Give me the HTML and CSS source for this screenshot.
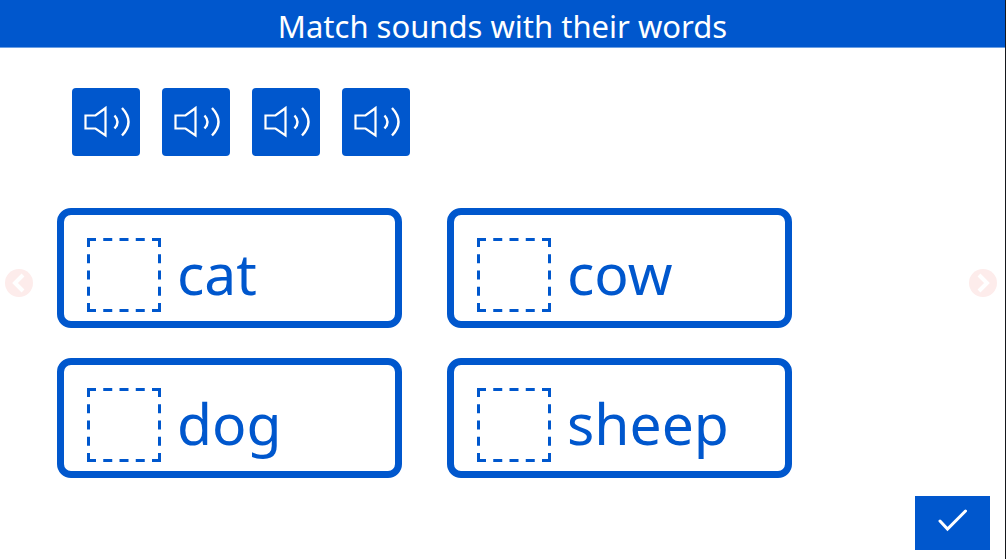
FILE: index.html
```html
<!DOCTYPE html>
<html lang="en">
<head>
<meta charset="utf-8">
<meta name="viewport" content="width=device-width, initial-scale=1">
<title>Match sounds with their words</title>
<link rel="stylesheet" href="styles.css">
</head>
<body>
<svg class="symbols" aria-hidden="true">
  <symbol id="speaker" viewBox="0 0 68 68">
    <path d="M13.500 27.500H23.500L33.500 20V47.500L23.500 40.500H13.500Z" stroke-width="2.200"/>
    <path d="M42.500 27.500Q48.500 34 42.500 40.500M50 20Q63 34 50 47.500" stroke-width="2.400"/>
  </symbol>
  <symbol id="slot" viewBox="0 0 74 74">
    <path d="M0 1.500H74M0 72.500H74M1.500 0V74M72.500 0V74" stroke-width="3" stroke-dasharray="9 7.250"/>
  </symbol>
</svg>
<header class="header"><h1 class="title">Match sounds with their words</h1></header>
<main class="activity">
  <button class="nav" type="button" aria-label="Previous">
    <svg class="nav-icon" viewBox="0 0 28 28"><circle cx="14" cy="14" r="14"/><path d="M18 6L10 14L18 22"/></svg>
  </button>
  <div class="board">
    <div class="sounds">
      <button class="sound" type="button" aria-label="Play sound 1"><svg class="icon"><use href="#speaker"/></svg></button>
      <button class="sound" type="button" aria-label="Play sound 2"><svg class="icon"><use href="#speaker"/></svg></button>
      <button class="sound" type="button" aria-label="Play sound 3"><svg class="icon"><use href="#speaker"/></svg></button>
      <button class="sound" type="button" aria-label="Play sound 4"><svg class="icon"><use href="#speaker"/></svg></button>
    </div>
    <div class="words">
      <div class="card"><svg class="slot"><use href="#slot"/></svg><span class="word">cat</span></div>
      <div class="card"><svg class="slot"><use href="#slot"/></svg><span class="word">cow</span></div>
      <div class="card"><svg class="slot"><use href="#slot"/></svg><span class="word">dog</span></div>
      <div class="card"><svg class="slot"><use href="#slot"/></svg><span class="word">sheep</span></div>
    </div>
  </div>
  <button class="nav" type="button" aria-label="Next">
    <svg class="nav-icon" viewBox="0 0 28 28"><circle cx="14" cy="14" r="14"/><path d="M10 6L18 14L10 22"/></svg>
  </button>
</main>
<footer class="footer">
  <button class="check" type="button" aria-label="Check answers">
    <svg class="check-icon" viewBox="0 0 30 24"><path d="M2 12L9.500 20L27.500 2"/></svg>
  </button>
</footer>
</body>
</html>
```

FILE: styles.css
```css
* {
  box-sizing: border-box;
}

body {
  display: flex;
  flex-direction: column;
  min-height: 100vh;
  margin: 0;
  border-right: 1px solid #16181d;
  background: #fff;
  color: #0057cd;
  font-family: "Noto Sans", "Open Sans", sans-serif;
}

button {
  padding: 0;
  border: 0;
  cursor: pointer;
}

svg {
  display: block;
  fill: none;
}

.symbols {
  position: absolute;
  width: 0;
  height: 0;
}

.header {
  padding: 6px 16px 1px;
  border-bottom: 1px solid #6b9fe3;
  background: #0057cd;
  color: #fff;
  text-align: center;
}

.title {
  margin: 0;
  font-size: 31px;
  font-weight: 400;
  line-height: 40px;
}

.activity {
  display: flex;
  align-items: center;
  gap: 24px;
  padding: 40px 8px 0 5px;
}

.nav {
  flex: none;
  background: none;
}

.nav-icon {
  width: 28px;
  height: 28px;
  fill: #fdeceb;
  stroke: none;
}

.nav-icon path {
  fill: none;
  stroke: #fff;
  stroke-width: 4;
}

.board {
  flex: 1;
}

.sounds {
  display: flex;
  gap: 22px;
  padding-left: 15px;
}

.sound {
  width: 68px;
  height: 68px;
  border-radius: 4px;
  background: #0057cd;
}

.icon {
  width: 68px;
  height: 68px;
  stroke: #fff;
}

.words {
  display: grid;
  grid-template-columns: repeat(2, minmax(0, 345px));
  gap: 30px 45px;
  padding-top: 52px;
}

.card {
  display: flex;
  align-items: flex-start;
  gap: 16px;
  padding: 23px 23px 9px;
  border: 7px solid #0057cd;
  border-radius: 14px;
}

.slot {
  flex: none;
  width: 74px;
  height: 74px;
  stroke: #0057cd;
}

.word {
  font-size: 57px;
  line-height: 70px;
}

.footer {
  display: flex;
  justify-content: flex-end;
  margin-top: auto;
  padding: 18px 15px 9px;
}

.check {
  display: flex;
  align-items: center;
  justify-content: center;
  width: 75px;
  height: 54px;
  padding-bottom: 5px;
  background: #0057cd;
}

.check-icon {
  width: 30px;
  height: 24px;
  stroke: #fff;
  stroke-width: 3;
  stroke-linecap: round;
}
```
